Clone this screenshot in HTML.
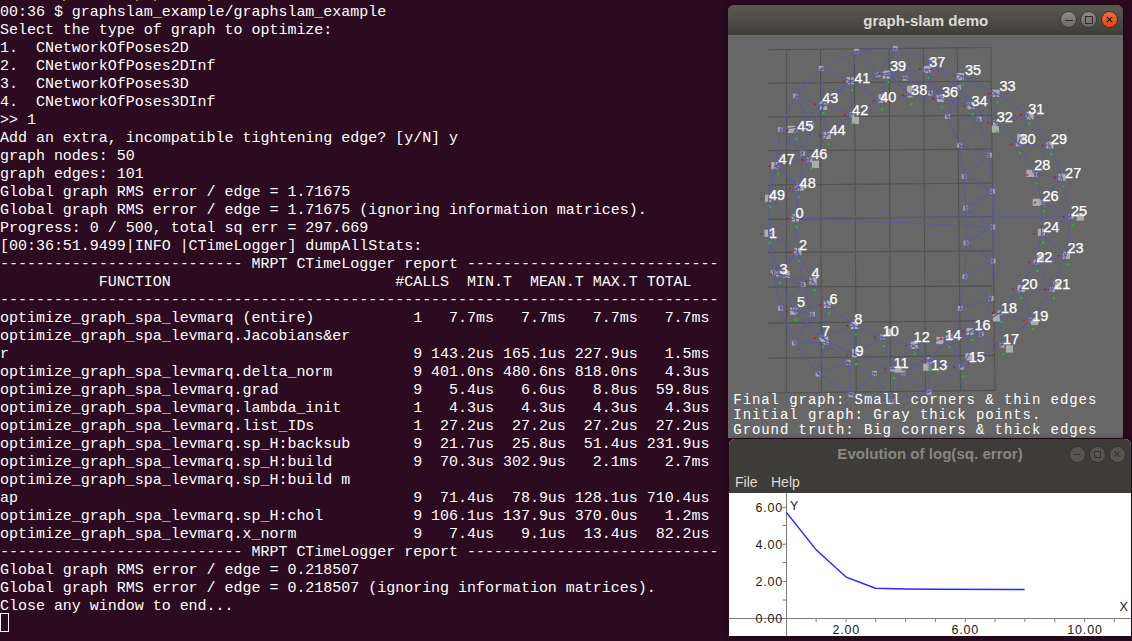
<!DOCTYPE html>
<html><head><meta charset="utf-8">
<style>
html,body{margin:0;padding:0;}
body{width:1132px;height:641px;overflow:hidden;background:#2c0a20;position:relative;}
#term{position:absolute;left:0;top:4px;margin:0;font-family:"Liberation Mono",monospace;font-size:15px;line-height:18px;color:#ffffff;white-space:pre;letter-spacing:-0.02px;}
#cursor{position:absolute;left:0;top:613px;width:7px;height:17px;border:1px solid #ffffff;}
.dots i{position:absolute;top:0;width:1.5px;height:1px;background:#b09020;}
#gw{position:absolute;left:728px;top:5px;width:395px;height:433px;border-radius:6px 6px 0 0;overflow:hidden;background:#676767;}
#gwsh{position:absolute;left:728px;top:5px;width:395px;height:433px;border-radius:6px 6px 0 0;box-shadow:0 1px 7px rgba(0,0,0,0.45);}
#ewsh{position:absolute;left:729px;top:439px;width:402px;height:197px;border-radius:6px 6px 0 0;box-shadow:0 1px 7px rgba(0,0,0,0.45);}
#gw .tb{position:absolute;left:0;top:0;width:395px;height:30px;background:linear-gradient(#5b5952,#3f3e39);}
.title{position:absolute;left:0;right:0;text-align:center;font-family:"Liberation Sans",sans-serif;font-weight:bold;font-size:15px;}
#gw .title{top:7px;color:#dfdbd2;left:0.5px;}
.btn{position:absolute;width:17px;height:17px;border-radius:50%;box-sizing:border-box;}
#gw svg{position:absolute;left:0;top:30px;}
.ftxt{position:absolute;left:5.3px;font-family:"Liberation Mono",monospace;font-size:14px;letter-spacing:0.93px;color:#ffffff;white-space:pre;line-height:15px;}
#ew{position:absolute;left:729px;top:439px;width:402px;height:197px;border-radius:6px 6px 0 0;overflow:hidden;background:#ffffff;}
#ew .tb{position:absolute;left:0;top:0;width:402px;height:54px;background:#3d3c38;}
#ew .title{top:6px;left:0px;color:#8a877f;font-size:15.1px;}
.menu{position:absolute;top:34.5px;font-family:"Liberation Sans",sans-serif;font-size:14px;color:#dfdbd2;}
#ew svg{position:absolute;left:0;top:54px;}
</style></head><body>
<div class="dots"><i style="left:63px"></i><i style="left:136px"></i><i style="left:154px"></i><i style="left:208px"></i></div>
<pre id="term">00:36 $ graphslam_example/graphslam_example
Select the type of graph to optimize:
1.  CNetworkOfPoses2D
2.  CNetworkOfPoses2DInf
3.  CNetworkOfPoses3D
4.  CNetworkOfPoses3DInf
&gt;&gt; 1
Add an extra, incompatible tightening edge? [y/N] y
graph nodes: 50
graph edges: 101
Global graph RMS error / edge = 1.71675
Global graph RMS error / edge = 1.71675 (ignoring information matrices).
Progress: 0 / 500, total sq err = 297.669
[00:36:51.9499|INFO |CTimeLogger] dumpAllStats:
--------------------------- MRPT CTimeLogger report ----------------------------
           FUNCTION                         #CALLS  MIN.T  MEAN.T MAX.T TOTAL
--------------------------------------------------------------------------------
optimize_graph_spa_levmarq (entire)           1   7.7ms   7.7ms   7.7ms   7.7ms
optimize_graph_spa_levmarq.Jacobians&amp;er
r                                             9 143.2us 165.1us 227.9us   1.5ms
optimize_graph_spa_levmarq.delta_norm         9 401.0ns 480.6ns 818.0ns   4.3us
optimize_graph_spa_levmarq.grad               9   5.4us   6.6us   8.8us  59.8us
optimize_graph_spa_levmarq.lambda_init        1   4.3us   4.3us   4.3us   4.3us
optimize_graph_spa_levmarq.list_IDs           1  27.2us  27.2us  27.2us  27.2us
optimize_graph_spa_levmarq.sp_H:backsub       9  21.7us  25.8us  51.4us 231.9us
optimize_graph_spa_levmarq.sp_H:build         9  70.3us 302.9us   2.1ms   2.7ms
optimize_graph_spa_levmarq.sp_H:build m
ap                                            9  71.4us  78.9us 128.1us 710.4us
optimize_graph_spa_levmarq.sp_H:chol          9 106.1us 137.9us 370.0us   1.2ms
optimize_graph_spa_levmarq.x_norm             9   7.4us   9.1us  13.4us  82.2us
--------------------------- MRPT CTimeLogger report ----------------------------
Global graph RMS error / edge = 0.218507
Global graph RMS error / edge = 0.218507 (ignoring information matrices).
Close any window to end...</pre>
<div id="cursor"></div>

<div id="gwsh"></div>
<div id="gw">
  <div class="tb">
    <div class="title">graph-slam demo</div>
    <div class="btn" style="left:332.3px;top:6.3px;background:linear-gradient(#8e8c86,#6a6964);border:1px solid #3a3935;"><div style="position:absolute;left:3.5px;top:8px;width:8px;height:1.1px;background:#2f2e2a"></div></div>
    <div class="btn" style="left:352.4px;top:6.3px;background:linear-gradient(#8e8c86,#6a6964);border:1px solid #3a3935;"><div style="position:absolute;left:3.5px;top:3.5px;width:6.5px;height:6.5px;border:1.1px solid #2f2e2a"></div></div>
    <div class="btn" style="left:372.5px;top:6.3px;background:linear-gradient(#f26c3c,#dc4816);border:1px solid #4a2a1a;"><svg width="15" height="15" style="position:absolute;left:0;top:0"><path d="M4.8 4.8L10.2 10.2M10.2 4.8L4.8 10.2" stroke="#1e1208" stroke-width="1.2"/></svg></div>
  </div>
  <svg width="395" height="403" viewBox="0 0 395 403"><g stroke="#515151" stroke-width="1.1"><line x1="40" y1="14.7" x2="262.8" y2="12.5"/><line x1="40" y1="48.2" x2="263.2" y2="46.2"/><line x1="40" y1="82.0" x2="263.6" y2="80.4"/><line x1="40" y1="115.8" x2="264.0" y2="114.1"/><line x1="40" y1="150.1" x2="264.5" y2="148.0"/><line x1="40" y1="184.4" x2="264.9" y2="181.5"/><line x1="40" y1="217.4" x2="265.3" y2="215.9"/><line x1="40" y1="252.0" x2="265.7" y2="251.1"/><line x1="40" y1="288.1" x2="266.1" y2="285.7"/><line x1="40" y1="323.2" x2="266.6" y2="320.4"/><line x1="40" y1="358.0" x2="267.0" y2="355.4"/><line x1="58.6" y1="14.5" x2="58.4" y2="357.8"/><line x1="92.5" y1="14.2" x2="93.5" y2="357.4"/><line x1="126.3" y1="13.8" x2="128.3" y2="357.0"/><line x1="161.2" y1="13.5" x2="162.5" y2="356.6"/><line x1="195.4" y1="13.2" x2="197.4" y2="356.2"/><line x1="229.2" y1="12.8" x2="232.5" y2="355.8"/><line x1="262.8" y1="12.5" x2="267.0" y2="355.4"/></g><g fill="#a2a2b0"><rect x="64.8" y="180.5" width="5" height="5"/><rect x="38.0" y="196.0" width="5" height="5"/><rect x="67.4" y="214.5" width="5" height="5"/><rect x="48.0" y="236.5" width="5" height="5"/><rect x="82.6" y="243.7" width="5" height="5"/><rect x="63.2" y="273.6" width="5" height="5"/><rect x="96.9" y="266.9" width="5" height="5"/><rect x="91.5" y="300.5" width="5" height="5"/><rect x="123.8" y="288.0" width="5" height="5"/><rect x="124.0" y="317.5" width="5" height="5"/><rect x="151.8" y="299.5" width="5" height="5"/><rect x="162.0" y="331.5" width="5" height="5"/><rect x="182.8" y="307.8" width="5" height="5"/><rect x="198.7" y="323.5" width="5" height="5"/><rect x="217.5" y="300.5" width="5" height="5"/><rect x="230.8" y="329.7" width="5" height="5"/><rect x="240.1" y="293.5" width="5" height="5"/><rect x="271.4" y="307.8" width="5" height="5"/><rect x="269.5" y="275.2" width="5" height="5"/><rect x="300.8" y="282.7" width="5" height="5"/><rect x="289.5" y="251.5" width="5" height="5"/><rect x="321.9" y="251.8" width="5" height="5"/><rect x="305.5" y="224.5" width="5" height="5"/><rect x="335.6" y="217.9" width="5" height="5"/><rect x="311.0" y="196.1" width="5" height="5"/><rect x="340.5" y="178.9" width="5" height="5"/><rect x="311.7" y="164.8" width="5" height="5"/><rect x="331.5" y="139.8" width="5" height="5"/><rect x="304.2" y="137.0" width="5" height="5"/><rect x="319.4" y="107.7" width="5" height="5"/><rect x="287.8" y="106.5" width="5" height="5"/><rect x="297.5" y="77.0" width="5" height="5"/><rect x="265.0" y="85.0" width="5" height="5"/><rect x="265.5" y="55.8" width="5" height="5"/><rect x="240.6" y="68.0" width="5" height="5"/><rect x="231.0" y="38.0" width="5" height="5"/><rect x="209.7" y="60.9" width="5" height="5"/><rect x="196.6" y="31.5" width="5" height="5"/><rect x="179.5" y="57.5" width="5" height="5"/><rect x="156.5" y="35.5" width="5" height="5"/><rect x="150.0" y="63.0" width="5" height="5"/><rect x="119.9" y="43.3" width="5" height="5"/><rect x="121.5" y="77.0" width="5" height="5"/><rect x="91.5" y="66.5" width="5" height="5"/><rect x="96.7" y="97.9" width="5" height="5"/><rect x="64.5" y="92.5" width="5" height="5"/><rect x="79.3" y="122.1" width="5" height="5"/><rect x="46.3" y="128.0" width="5" height="5"/><rect x="66.7" y="150.5" width="5" height="5"/><rect x="38.1" y="160.7" width="5" height="5"/><rect x="42.7" y="234.9" width="5" height="5"/><rect x="72.7" y="246.9" width="5" height="5"/><rect x="50.0" y="270.6" width="5" height="5"/><rect x="81.9" y="276.9" width="5" height="5"/><rect x="63.9" y="305.6" width="5" height="5"/><rect x="95.6" y="304.8" width="5" height="5"/><rect x="87.6" y="336.5" width="5" height="5"/><rect x="117.6" y="324.8" width="5" height="5"/><rect x="120.6" y="357.2" width="5" height="5"/><rect x="144.0" y="335.8" width="5" height="5"/><rect x="160.8" y="364.2" width="5" height="5"/><rect x="173.0" y="335.4" width="5" height="5"/><rect x="198.7" y="354.7" width="5" height="5"/><rect x="198.7" y="322.2" width="5" height="5"/><rect x="219.6" y="299.7" width="5" height="5"/><rect x="250.7" y="296.9" width="5" height="5"/><rect x="229.8" y="270.9" width="5" height="5"/><rect x="260.6" y="260.8" width="5" height="5"/><rect x="234.5" y="239.2" width="5" height="5"/><rect x="262.6" y="223.5" width="5" height="5"/><rect x="235.6" y="205.5" width="5" height="5"/><rect x="262.2" y="189.5" width="5" height="5"/><rect x="235.2" y="170.7" width="5" height="5"/><rect x="262.0" y="153.8" width="5" height="5"/><rect x="233.7" y="138.8" width="5" height="5"/><rect x="258.8" y="117.6" width="5" height="5"/><rect x="229.0" y="107.7" width="5" height="5"/><rect x="248.7" y="81.7" width="5" height="5"/><rect x="216.9" y="79.0" width="5" height="5"/><rect x="228.1" y="50.2" width="5" height="5"/><rect x="200.0" y="55.8" width="5" height="5"/><rect x="200.7" y="23.5" width="5" height="5"/><rect x="174.8" y="40.7" width="5" height="5"/><rect x="164.9" y="10.9" width="5" height="5"/><rect x="147.7" y="36.9" width="5" height="5"/><rect x="126.1" y="13.7" width="5" height="5"/><rect x="90.7" y="30.9" width="5" height="5"/><rect x="93.1" y="68.9" width="5" height="5"/><rect x="65.1" y="58.6" width="5" height="5"/><rect x="80.6" y="87.7" width="5" height="5"/><rect x="49.9" y="92.1" width="5" height="5"/><rect x="72.0" y="115.8" width="5" height="5"/><rect x="44.4" y="128.2" width="5" height="5"/><rect x="69.6" y="149.7" width="5" height="5"/></g><g fill="#acacac"><rect x="63.7" y="179.4" width="7.2" height="7.2"/><rect x="36.4" y="194.7" width="7.2" height="7.2"/><rect x="66.2" y="212.9" width="7.2" height="7.2"/><rect x="54.6" y="235.8" width="7.2" height="7.2"/><rect x="81.5" y="242.6" width="7.2" height="7.2"/><rect x="62.1" y="272.5" width="7.2" height="7.2"/><rect x="95.8" y="265.8" width="7.2" height="7.2"/><rect x="93.0" y="301.0" width="7.2" height="7.2"/><rect x="122.7" y="286.9" width="7.2" height="7.2"/><rect x="123.9" y="313.9" width="7.2" height="7.2"/><rect x="157.7" y="293.7" width="7.2" height="7.2"/><rect x="166.4" y="330.7" width="7.2" height="7.2"/><rect x="182.6" y="306.7" width="7.2" height="7.2"/><rect x="195.2" y="328.6" width="7.2" height="7.2"/><rect x="208.4" y="301.9" width="7.2" height="7.2"/><rect x="237.4" y="318.1" width="7.2" height="7.2"/><rect x="238.4" y="293.1" width="7.2" height="7.2"/><rect x="277.9" y="310.4" width="7.2" height="7.2"/><rect x="264.8" y="279.3" width="7.2" height="7.2"/><rect x="302.9" y="282.7" width="7.2" height="7.2"/><rect x="289.6" y="249.9" width="7.2" height="7.2"/><rect x="325.5" y="246.8" width="7.2" height="7.2"/><rect x="308.6" y="218.7" width="7.2" height="7.2"/><rect x="334.9" y="216.8" width="7.2" height="7.2"/><rect x="309.9" y="193.7" width="7.2" height="7.2"/><rect x="348.7" y="178.5" width="7.2" height="7.2"/><rect x="304.7" y="163.7" width="7.2" height="7.2"/><rect x="330.4" y="138.7" width="7.2" height="7.2"/><rect x="298.4" y="134.7" width="7.2" height="7.2"/><rect x="318.3" y="106.6" width="7.2" height="7.2"/><rect x="289.0" y="98.9" width="7.2" height="7.2"/><rect x="298.4" y="77.3" width="7.2" height="7.2"/><rect x="263.8" y="90.3" width="7.2" height="7.2"/><rect x="264.4" y="54.7" width="7.2" height="7.2"/><rect x="239.5" y="66.9" width="7.2" height="7.2"/><rect x="228.7" y="37.9" width="7.2" height="7.2"/><rect x="208.6" y="59.8" width="7.2" height="7.2"/><rect x="195.7" y="30.9" width="7.2" height="7.2"/><rect x="179.0" y="50.8" width="7.2" height="7.2"/><rect x="154.7" y="36.5" width="7.2" height="7.2"/><rect x="150.5" y="58.9" width="7.2" height="7.2"/><rect x="118.6" y="42.1" width="7.2" height="7.2"/><rect x="123.8" y="81.7" width="7.2" height="7.2"/><rect x="92.0" y="67.8" width="7.2" height="7.2"/><rect x="95.6" y="96.8" width="7.2" height="7.2"/><rect x="59.7" y="90.8" width="7.2" height="7.2"/><rect x="83.8" y="125.7" width="7.2" height="7.2"/><rect x="43.3" y="127.1" width="7.2" height="7.2"/><rect x="68.5" y="148.6" width="7.2" height="7.2"/><rect x="37.0" y="159.6" width="7.2" height="7.2"/></g><path fill="none" stroke="#5b5b9c" stroke-width="1.05" d="M67.3,183.0L40.5,198.5M67.3,183.0L69.9,217.0M40.5,198.5L69.9,217.0M40.5,198.5L50.5,239.0M69.9,217.0L50.5,239.0M69.9,217.0L85.1,246.2M50.5,239.0L85.1,246.2M50.5,239.0L65.7,276.1M85.1,246.2L65.7,276.1M85.1,246.2L99.4,269.4M65.7,276.1L99.4,269.4M65.7,276.1L94.0,303.0M99.4,269.4L94.0,303.0M99.4,269.4L126.3,290.5M94.0,303.0L126.3,290.5M94.0,303.0L126.5,320.0M126.3,290.5L126.5,320.0M126.3,290.5L154.3,302.0M126.5,320.0L154.3,302.0M126.5,320.0L164.5,334.0M154.3,302.0L164.5,334.0M154.3,302.0L185.3,310.3M164.5,334.0L185.3,310.3M164.5,334.0L201.2,326.0M185.3,310.3L201.2,326.0M185.3,310.3L220.0,303.0M201.2,326.0L220.0,303.0M201.2,326.0L233.3,332.2M220.0,303.0L233.3,332.2M220.0,303.0L242.6,296.0M233.3,332.2L242.6,296.0M233.3,332.2L273.9,310.3M242.6,296.0L273.9,310.3M242.6,296.0L272.0,277.7M273.9,310.3L272.0,277.7M273.9,310.3L303.3,285.2M272.0,277.7L303.3,285.2M272.0,277.7L292.0,254.0M303.3,285.2L292.0,254.0M303.3,285.2L324.4,254.3M292.0,254.0L324.4,254.3M292.0,254.0L308.0,227.0M324.4,254.3L308.0,227.0M324.4,254.3L338.1,220.4M308.0,227.0L338.1,220.4M308.0,227.0L313.5,198.6M338.1,220.4L313.5,198.6M338.1,220.4L343.0,181.4M313.5,198.6L343.0,181.4M313.5,198.6L314.2,167.3M343.0,181.4L314.2,167.3M343.0,181.4L334.0,142.3M314.2,167.3L334.0,142.3M314.2,167.3L306.7,139.5M334.0,142.3L306.7,139.5M334.0,142.3L321.9,110.2M306.7,139.5L321.9,110.2M306.7,139.5L290.3,109.0M321.9,110.2L290.3,109.0M321.9,110.2L300.0,79.5M290.3,109.0L300.0,79.5M290.3,109.0L267.5,87.5M300.0,79.5L267.5,87.5M300.0,79.5L268.0,58.3M267.5,87.5L268.0,58.3M267.5,87.5L243.1,70.5M268.0,58.3L243.1,70.5M268.0,58.3L233.5,40.5M243.1,70.5L233.5,40.5M243.1,70.5L212.2,63.4M233.5,40.5L212.2,63.4M233.5,40.5L199.1,34.0M212.2,63.4L199.1,34.0M212.2,63.4L182.0,60.0M199.1,34.0L182.0,60.0M199.1,34.0L159.0,38.0M182.0,60.0L159.0,38.0M182.0,60.0L152.5,65.5M159.0,38.0L152.5,65.5M159.0,38.0L122.4,45.8M152.5,65.5L122.4,45.8M152.5,65.5L124.0,79.5M122.4,45.8L124.0,79.5M122.4,45.8L94.0,69.0M124.0,79.5L94.0,69.0M124.0,79.5L99.2,100.4M94.0,69.0L99.2,100.4M94.0,69.0L67.0,95.0M99.2,100.4L67.0,95.0M99.2,100.4L81.8,124.6M67.0,95.0L81.8,124.6M67.0,95.0L48.8,130.5M81.8,124.6L48.8,130.5M81.8,124.6L69.2,153.0M48.8,130.5L69.2,153.0M48.8,130.5L40.6,163.2M69.2,153.0L40.6,163.2M69.2,153.0L67.3,183.0M40.6,163.2L67.3,183.0M40.6,163.2L40.5,198.5M67.3,183.0L343.0,181.4M67.3,183.0L40.5,198.5M67.3,183.0L69.9,217.0M40.5,198.5L69.9,217.0M40.5,198.5L45.2,237.4M69.9,217.0L45.2,237.4M69.9,217.0L75.2,249.4M45.2,237.4L75.2,249.4M45.2,237.4L52.5,273.1M75.2,249.4L52.5,273.1M75.2,249.4L84.4,279.4M52.5,273.1L84.4,279.4M52.5,273.1L66.4,308.1M84.4,279.4L66.4,308.1M84.4,279.4L98.1,307.3M66.4,308.1L98.1,307.3M66.4,308.1L90.1,339.0M98.1,307.3L90.1,339.0M98.1,307.3L120.1,327.3M90.1,339.0L120.1,327.3M90.1,339.0L123.1,359.7M120.1,327.3L123.1,359.7M120.1,327.3L146.5,338.3M123.1,359.7L146.5,338.3M123.1,359.7L163.3,366.7M146.5,338.3L163.3,366.7M146.5,338.3L175.5,337.9M163.3,366.7L175.5,337.9M163.3,366.7L201.2,357.2M175.5,337.9L201.2,357.2M175.5,337.9L201.2,324.7M201.2,357.2L201.2,324.7M201.2,357.2L233.3,332.2M201.2,324.7L233.3,332.2M201.2,324.7L222.1,302.2M233.3,332.2L222.1,302.2M233.3,332.2L253.2,299.4M222.1,302.2L253.2,299.4M222.1,302.2L232.3,273.4M253.2,299.4L232.3,273.4M253.2,299.4L263.1,263.3M232.3,273.4L263.1,263.3M232.3,273.4L237.0,241.7M263.1,263.3L237.0,241.7M263.1,263.3L265.1,226.0M237.0,241.7L265.1,226.0M237.0,241.7L238.1,208.0M265.1,226.0L238.1,208.0M265.1,226.0L264.7,192.0M238.1,208.0L264.7,192.0M238.1,208.0L237.7,173.2M264.7,192.0L237.7,173.2M264.7,192.0L264.5,156.3M237.7,173.2L264.5,156.3M237.7,173.2L236.2,141.3M264.5,156.3L236.2,141.3M264.5,156.3L261.3,120.1M236.2,141.3L261.3,120.1M236.2,141.3L231.5,110.2M261.3,120.1L231.5,110.2M261.3,120.1L251.2,84.2M231.5,110.2L251.2,84.2M231.5,110.2L219.4,81.5M251.2,84.2L219.4,81.5M251.2,84.2L230.6,52.7M219.4,81.5L230.6,52.7M219.4,81.5L202.5,58.3M230.6,52.7L202.5,58.3M230.6,52.7L203.2,26.0M202.5,58.3L203.2,26.0M202.5,58.3L177.3,43.2M203.2,26.0L177.3,43.2M203.2,26.0L167.4,13.4M177.3,43.2L167.4,13.4M177.3,43.2L150.2,39.4M167.4,13.4L150.2,39.4M167.4,13.4L128.6,16.2M150.2,39.4L128.6,16.2M150.2,39.4L122.1,46.0M128.6,16.2L122.1,46.0M128.6,16.2L93.2,33.4M122.1,46.0L93.2,33.4M122.1,46.0L95.6,71.4M93.2,33.4L95.6,71.4M93.2,33.4L67.6,61.1M95.6,71.4L67.6,61.1M95.6,71.4L83.1,90.2M67.6,61.1L83.1,90.2M67.6,61.1L52.4,94.6M83.1,90.2L52.4,94.6M83.1,90.2L74.5,118.3M52.4,94.6L74.5,118.3M52.4,94.6L46.9,130.7M74.5,118.3L46.9,130.7M74.5,118.3L72.1,152.2M46.9,130.7L72.1,152.2M46.9,130.7L40.6,163.2M72.1,152.2L40.6,163.2M72.1,152.2L67.3,183.0M40.6,163.2L67.3,183.0M40.6,163.2L40.5,198.5M67.3,183.0L264.7,192.0"/><g fill="#c81010"><rect x="59.3" y="182.5" width="1.6" height="1.6"/><rect x="32.5" y="198.0" width="1.6" height="1.6"/><rect x="61.9" y="216.5" width="1.6" height="1.6"/><rect x="42.5" y="238.5" width="1.6" height="1.6"/><rect x="77.1" y="245.7" width="1.6" height="1.6"/><rect x="57.7" y="275.6" width="1.6" height="1.6"/><rect x="91.4" y="268.9" width="1.6" height="1.6"/><rect x="86.0" y="302.5" width="1.6" height="1.6"/><rect x="118.3" y="290.0" width="1.6" height="1.6"/><rect x="118.5" y="319.5" width="1.6" height="1.6"/><rect x="146.3" y="301.5" width="1.6" height="1.6"/><rect x="156.5" y="333.5" width="1.6" height="1.6"/><rect x="177.3" y="309.8" width="1.6" height="1.6"/><rect x="193.2" y="325.5" width="1.6" height="1.6"/><rect x="212.0" y="302.5" width="1.6" height="1.6"/><rect x="225.3" y="331.7" width="1.6" height="1.6"/><rect x="234.6" y="295.5" width="1.6" height="1.6"/><rect x="265.9" y="309.8" width="1.6" height="1.6"/><rect x="264.0" y="277.2" width="1.6" height="1.6"/><rect x="295.3" y="284.7" width="1.6" height="1.6"/><rect x="284.0" y="253.5" width="1.6" height="1.6"/><rect x="316.4" y="253.8" width="1.6" height="1.6"/><rect x="300.0" y="226.5" width="1.6" height="1.6"/><rect x="330.1" y="219.9" width="1.6" height="1.6"/><rect x="305.5" y="198.1" width="1.6" height="1.6"/><rect x="335.0" y="180.9" width="1.6" height="1.6"/><rect x="306.2" y="166.8" width="1.6" height="1.6"/><rect x="326.0" y="141.8" width="1.6" height="1.6"/><rect x="298.7" y="139.0" width="1.6" height="1.6"/><rect x="313.9" y="109.7" width="1.6" height="1.6"/><rect x="282.3" y="108.5" width="1.6" height="1.6"/><rect x="292.0" y="79.0" width="1.6" height="1.6"/><rect x="259.5" y="87.0" width="1.6" height="1.6"/><rect x="260.0" y="57.8" width="1.6" height="1.6"/><rect x="235.1" y="70.0" width="1.6" height="1.6"/><rect x="225.5" y="40.0" width="1.6" height="1.6"/><rect x="204.2" y="62.9" width="1.6" height="1.6"/><rect x="191.1" y="33.5" width="1.6" height="1.6"/><rect x="174.0" y="59.5" width="1.6" height="1.6"/><rect x="151.0" y="37.5" width="1.6" height="1.6"/><rect x="144.5" y="65.0" width="1.6" height="1.6"/><rect x="114.4" y="45.3" width="1.6" height="1.6"/><rect x="116.0" y="79.0" width="1.6" height="1.6"/><rect x="86.0" y="68.5" width="1.6" height="1.6"/><rect x="91.2" y="99.9" width="1.6" height="1.6"/><rect x="59.0" y="94.5" width="1.6" height="1.6"/><rect x="73.8" y="124.1" width="1.6" height="1.6"/><rect x="40.8" y="130.0" width="1.6" height="1.6"/><rect x="61.2" y="152.5" width="1.6" height="1.6"/><rect x="32.6" y="162.7" width="1.6" height="1.6"/></g><g fill="#18c818"><rect x="67.8" y="191.0" width="2" height="2"/><rect x="41.0" y="206.5" width="2" height="2"/><rect x="70.4" y="225.0" width="2" height="2"/><rect x="51.0" y="247.0" width="2" height="2"/><rect x="85.6" y="254.2" width="2" height="2"/><rect x="66.2" y="284.1" width="2" height="2"/><rect x="99.9" y="277.4" width="2" height="2"/><rect x="94.5" y="311.0" width="2" height="2"/><rect x="126.8" y="298.5" width="2" height="2"/><rect x="127.0" y="328.0" width="2" height="2"/><rect x="154.8" y="310.0" width="2" height="2"/><rect x="165.0" y="342.0" width="2" height="2"/><rect x="185.8" y="318.3" width="2" height="2"/><rect x="201.7" y="334.0" width="2" height="2"/><rect x="220.5" y="311.0" width="2" height="2"/><rect x="233.8" y="340.2" width="2" height="2"/><rect x="243.1" y="304.0" width="2" height="2"/><rect x="274.4" y="318.3" width="2" height="2"/><rect x="272.5" y="285.7" width="2" height="2"/><rect x="303.8" y="293.2" width="2" height="2"/><rect x="292.5" y="262.0" width="2" height="2"/><rect x="324.9" y="262.3" width="2" height="2"/><rect x="308.5" y="235.0" width="2" height="2"/><rect x="338.6" y="228.4" width="2" height="2"/><rect x="314.0" y="206.6" width="2" height="2"/><rect x="343.5" y="189.4" width="2" height="2"/><rect x="314.7" y="175.3" width="2" height="2"/><rect x="334.5" y="150.3" width="2" height="2"/><rect x="307.2" y="147.5" width="2" height="2"/><rect x="322.4" y="118.2" width="2" height="2"/><rect x="290.8" y="117.0" width="2" height="2"/><rect x="300.5" y="87.5" width="2" height="2"/><rect x="268.0" y="95.5" width="2" height="2"/><rect x="268.5" y="66.3" width="2" height="2"/><rect x="243.6" y="78.5" width="2" height="2"/><rect x="234.0" y="48.5" width="2" height="2"/><rect x="212.7" y="71.4" width="2" height="2"/><rect x="199.6" y="42.0" width="2" height="2"/><rect x="182.5" y="68.0" width="2" height="2"/><rect x="159.5" y="46.0" width="2" height="2"/><rect x="153.0" y="73.5" width="2" height="2"/><rect x="122.9" y="53.8" width="2" height="2"/><rect x="124.5" y="87.5" width="2" height="2"/><rect x="94.5" y="77.0" width="2" height="2"/><rect x="99.7" y="108.4" width="2" height="2"/><rect x="67.5" y="103.0" width="2" height="2"/><rect x="82.3" y="132.6" width="2" height="2"/><rect x="49.3" y="138.5" width="2" height="2"/><rect x="69.7" y="161.0" width="2" height="2"/><rect x="41.1" y="171.2" width="2" height="2"/></g><g fill="#ffffff" stroke="#ffffff" stroke-width="0.25" font-family="Liberation Sans, sans-serif" font-size="14.5"><text x="67.4" y="182.6">0</text><text x="41.0" y="202.5">1</text><text x="70.9" y="215.0">2</text><text x="51.5" y="238.7">3</text><text x="83.4" y="242.9">4</text><text x="68.9" y="272.4">5</text><text x="101.4" y="268.6">6</text><text x="93.9" y="301.1">7</text><text x="126.3" y="288.6">8</text><text x="127.6" y="321.0">9</text><text x="154.8" y="301.0">10</text><text x="165.4" y="333.3">11</text><text x="185.6" y="307.0">12</text><text x="203.3" y="334.5">13</text><text x="217.3" y="304.8">14</text><text x="240.7" y="326.7">15</text><text x="246.5" y="294.6">16</text><text x="275.0" y="309.4">17</text><text x="273.0" y="277.5">18</text><text x="304.2" y="285.5">19</text><text x="293.5" y="254.0">20</text><text x="326.3" y="254.0">21</text><text x="308.3" y="227.0">22</text><text x="339.5" y="218.4">23</text><text x="315.3" y="196.6">24</text><text x="342.9" y="180.9">25</text><text x="314.4" y="165.7">26</text><text x="337.1" y="143.0">27</text><text x="306.2" y="135.3">28</text><text x="323.0" y="108.8">29</text><text x="291.4" y="108.7">30</text><text x="300.3" y="78.5">31</text><text x="268.8" y="87.0">32</text><text x="271.5" y="55.5">33</text><text x="243.5" y="70.9">34</text><text x="237.0" y="39.6">35</text><text x="214.0" y="61.8">36</text><text x="201.3" y="32.4">37</text><text x="183.1" y="60.4">38</text><text x="162.0" y="35.9">39</text><text x="152.2" y="66.8">40</text><text x="126.2" y="47.5">41</text><text x="124.1" y="79.8">42</text><text x="94.2" y="67.7">43</text><text x="101.4" y="99.6">44</text><text x="69.3" y="95.6">45</text><text x="83.3" y="123.7">46</text><text x="50.6" y="128.8">47</text><text x="71.6" y="152.9">48</text><text x="41.0" y="165.0">49</text></g></svg>
  <div class="ftxt" style="top:388px">Final graph: Small corners &amp; thin edges</div>
  <div class="ftxt" style="top:403px">Initial graph: Gray thick points.</div>
  <div class="ftxt" style="top:418px">Ground truth: Big corners &amp; thick edges</div>
</div>

<div id="ewsh"></div>
<div id="ew">
  <div class="tb">
    <div class="title">Evolution of log(sq. error)</div>
    <div class="btn" style="left:340px;top:7.2px;background:#56554f;border:1px solid #34332f;"><div style="position:absolute;left:4px;top:6.5px;width:6px;height:1.2px;background:#34332f"></div></div>
    <div class="btn" style="left:360px;top:7.2px;background:#56554f;border:1px solid #34332f;"><div style="position:absolute;left:3.5px;top:3.5px;width:5px;height:5px;border:1.2px solid #34332f"></div></div>
    <div class="btn" style="left:380px;top:7.2px;background:#56554f;border:1px solid #34332f;"><svg width="14" height="14" style="position:absolute;left:0;top:0"><path d="M4.5 4.5L9.5 9.5M9.5 4.5L4.5 9.5" stroke="#34332f" stroke-width="1.2"/></svg></div>
    <div class="menu" style="left:6px">File</div>
    <div class="menu" style="left:42px">Help</div>
  </div>
  <svg width="402" height="143" viewBox="0 0 402 143">
    <g stroke="#7c7c7c" stroke-width="1" fill="none">
      <path d="M57.5 0V143M0 125.5H402"/>
      <path d="M53.4 14.7H57.4M53.4 32.4H57.4M53.4 51.2H57.4M53.4 69.6H57.4M53.4 88.4H57.4M53.4 107H57.4"/>
      <path d="M87.1 125V129M117.0 125V129M146.8 125V129M176.6 125V129M206.4 125V129M236.3 125V129M266.1 125V129M295.9 125V129M325.8 125V129M355.6 125V129M385.4 125V129"/>
    </g>
    <polyline fill="none" stroke="#2828ff" stroke-width="1.5" points="57.4,19.4 87.4,57.1 117.3,84.2 146.3,95.3 176,96.1 206,96.3 295.6,96.4"/>
    <g font-family="Liberation Sans,sans-serif" font-size="12.5" fill="#1a1a1a" letter-spacing="0.8">
      <text x="54.1" y="19.2" text-anchor="end">6.00</text>
      <text x="54.1" y="55.7" text-anchor="end">4.00</text>
      <text x="54.1" y="92.9" text-anchor="end">2.00</text>
      <text x="54.1" y="129.9" text-anchor="end">0.00</text>
      <text x="117.3" y="141" text-anchor="middle">2.00</text>
      <text x="236.3" y="141" text-anchor="middle">6.00</text>
      <text x="356" y="141" text-anchor="middle">10.00</text>
      <text x="61" y="16.8">Y</text>
      <text x="390.5" y="118.3">X</text>
    </g>
  </svg>
</div>
</body></html>
